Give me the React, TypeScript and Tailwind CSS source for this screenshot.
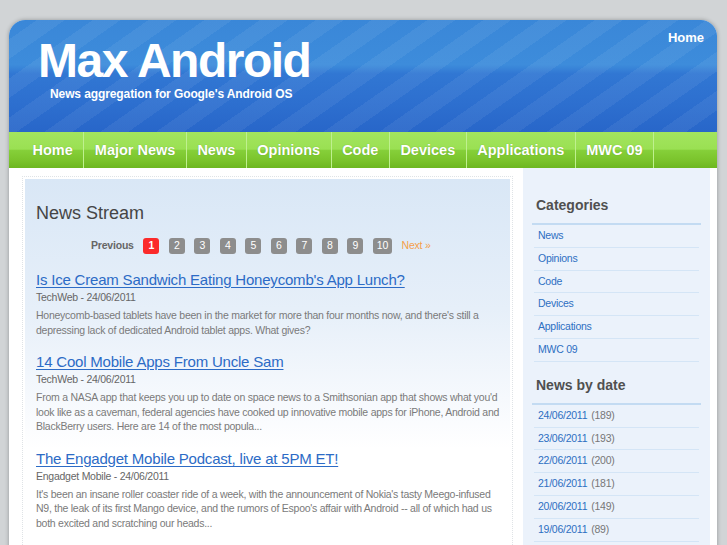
const navItems = ['Home', 'Major News', 'News', 'Opinions', 'Code', 'Devices', 'Applications', 'MWC 09'];

const categories = ['News', 'Opinions', 'Code', 'Devices', 'Applications', 'MWC 09'];

const dates = [
  ['24/06/2011', '189'],
  ['23/06/2011', '193'],
  ['22/06/2011', '200'],
  ['21/06/2011', '181'],
  ['20/06/2011', '149'],
  ['19/06/2011', '89'],
];

const articles = [
  {
    title: "Is Ice Cream Sandwich Eating Honeycomb's App Lunch?",
    source: 'TechWeb - 24/06/2011',
    body: "Honeycomb-based tablets have been in the market for more than four months now, and there's still a depressing lack of dedicated Android tablet apps. What gives?",
  },
  {
    title: '14 Cool Mobile Apps From Uncle Sam',
    source: 'TechWeb - 24/06/2011',
    body: "From a NASA app that keeps you up to date on space news to a Smithsonian app that shows what you'd look like as a caveman, federal agencies have cooked up innovative mobile apps for iPhone, Android and BlackBerry users. Here are 14 of the most popula...",
  },
  {
    title: 'The Engadget Mobile Podcast, live at 5PM ET!',
    source: 'Engadget Mobile - 24/06/2011',
    body: "It's been an insane roller coaster ride of a week, with the announcement of Nokia's tasty Meego-infused N9, the leak of its first Mango device, and the rumors of Espoo's affair with Android -- all of which had us both excited and scratching our heads...",
  },
];

function SideHeading({ children }: { children: React.ReactNode }) {
  return (
    <h4 className="pl-[4px] pb-[9px] text-[14px] leading-[18px] font-bold text-[#505050] border-b-2 border-[#c3dbf2]">
      {children}
    </h4>
  );
}

export default function App() {
  return (
    <div className="min-h-screen bg-[#d1d4d6] pt-[20px] pl-[9px] pr-[10px] font-['Liberation_Sans',Arial,sans-serif]">
      <div className="bg-white rounded-t-[16px] shadow-[0_0_4px_rgba(0,0,0,0.3)] min-h-[525px]">
        {/* Header */}
        <div className="relative h-[112px] rounded-t-[16px] overflow-hidden bg-[image:repeating-linear-gradient(145deg,rgba(255,255,255,0)_0px,rgba(255,255,255,0)_16px,rgba(255,255,255,0.06)_16px,rgba(255,255,255,0.06)_32px),linear-gradient(180deg,#3a87d8_0%,#3d8cdb_40%,#3177d3_48%,#2d6fcf_75%,#2866c9_100%)] pl-[29px] pt-[17px]">
          <h1 className="text-white text-[48px] leading-none font-bold tracking-[-1.5px]">Max Android</h1>
          <p className="mt-[2px] ml-[12px] text-white text-[12px] leading-[14px] font-bold tracking-[-0.1px]">
            News aggregation for Google's Android OS
          </p>
          <a className="absolute right-[13px] top-[10px] text-white text-[13px] leading-[16px] font-bold">Home</a>
        </div>

        {/* Navigation */}
        <div className="h-[36px] flex pl-[13px] bg-[linear-gradient(180deg,#a3e55e_0%,#9ae053_48%,#86d03a_50%,#7ac32b_80%,#6db720_100%)]">
          {navItems.map((item) => (
            <a
              key={item}
              className="h-full flex items-center pt-[1px] px-[10.5px] border-r border-[#bff08f] text-white text-[14.5px] font-bold [text-shadow:0_0_1px_rgba(60,110,20,0.5)]"
            >
              {item}
            </a>
          ))}
        </div>

        {/* Content */}
        <div className="flex">
          <div className="ml-[13px] mt-[8px] w-[491px] border border-dotted border-[#dfe3e6] p-[2px]">
            <div className="bg-[linear-gradient(180deg,#d9e7f6_0px,#e6eff9_130px,#f6f9fd_220px,#ffffff_270px)] pl-[11px] pr-[8px] pt-[24px] pb-[20px]">
              <h2 className="text-[18px] leading-[21px] text-[#454545]">News Stream</h2>

              <div className="mt-[14px] ml-[55px] flex items-center gap-[9.5px] text-[10.5px] tracking-[-0.2px]">
                <span className="font-bold text-[#666]">Previous</span>
                {Array.from({ length: 10 }, (_, i) => i + 1).map((n) => (
                  <span
                    key={n}
                    className={
                      n === 1
                        ? 'h-[16px] min-w-[16px] px-[4px] flex items-center justify-center rounded-[3px] bg-[#fb2a2a] text-white font-bold'
                        : 'h-[16px] min-w-[16px] px-[4px] flex items-center justify-center rounded-[3px] bg-[#8d8d8d] text-white'
                    }
                  >
                    {n}
                  </span>
                ))}
                <span className="text-[#f5a04a]">Next »</span>
              </div>

              <div className="mt-[17px]">
                {articles.map((a) => (
                  <div key={a.title} className="mb-[16px]">
                    <a className="block text-[15px] leading-[18px] tracking-[-0.2px] text-[#2c6bc6] underline underline-offset-[2px]">
                      {a.title}
                    </a>
                    <div className="text-[10.5px] leading-[16px] tracking-[-0.25px] text-[#666]">{a.source}</div>
                    <p className="mt-[3px] text-[10.5px] leading-[14.5px] tracking-[-0.25px] text-[#7a7a7a]">{a.body}</p>
                  </div>
                ))}
              </div>
            </div>
          </div>

          {/* Sidebar */}
          <div className="ml-[10px] w-[187px] bg-[#ebf2fb] pt-[28px] px-[9px] pb-[20px]">
            <SideHeading>Categories</SideHeading>
            <ul className="mx-[2px]">
              {categories.map((c) => (
                <li
                  key={c}
                  className="h-[22.8px] pl-[4px] flex items-center border-b border-[#d4e5f6] text-[10.5px] tracking-[-0.25px] text-[#2d6fc2]"
                >
                  {c}
                </li>
              ))}
            </ul>

            <div className="mt-[14px]">
              <SideHeading>News by date</SideHeading>
            </div>
            <ul className="mx-[2px]">
              {dates.map(([d, n]) => (
                <li
                  key={d}
                  className="h-[22.8px] pl-[4px] flex items-center border-b border-[#d4e5f6] text-[10.5px] tracking-[-0.25px]"
                >
                  <span className="text-[#2d6fc2]">{d}</span>
                  <span className="ml-[4px] text-[#777]">({n})</span>
                </li>
              ))}
            </ul>
          </div>
        </div>
      </div>
    </div>
  );
}
